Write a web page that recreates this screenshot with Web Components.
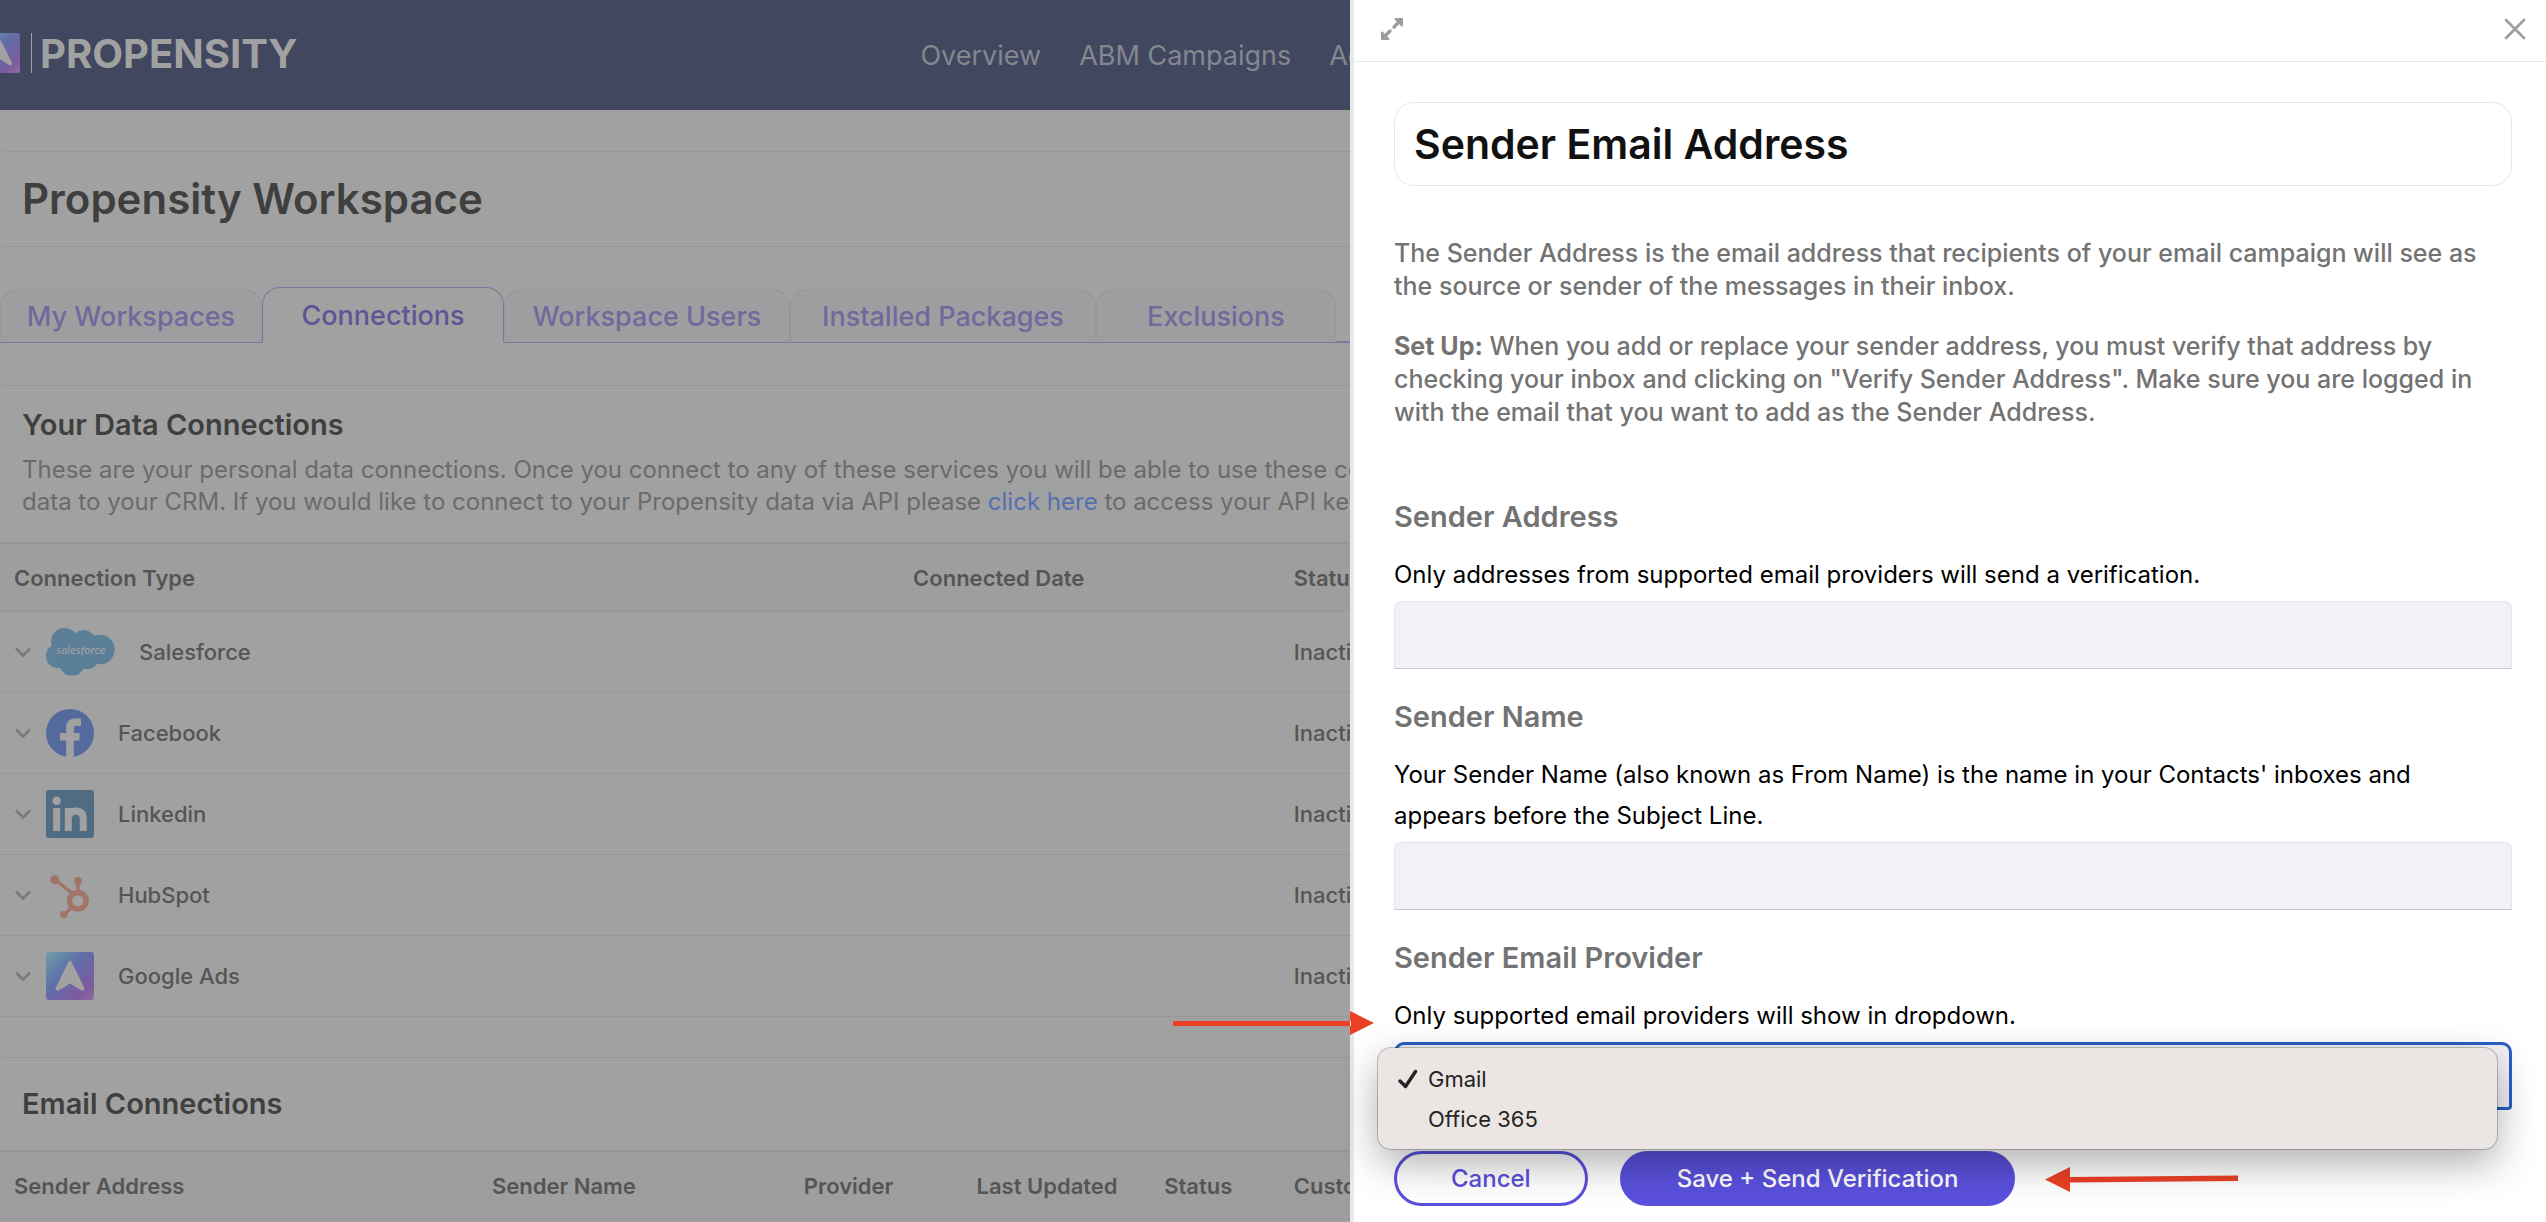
<!DOCTYPE html>
<html lang="en">
<head>
<meta charset="utf-8">
<title>Propensity Workspace</title>
<style>
    body {
        margin: 0;
        font-family: Inter, "Open Sans", sans-serif;
        background: #a1a1a1;
        --line: #969696;
        --purple: #5a50dc;
        --arrow: #eb4025;
    }
</style>
</head>
<body>
<app-shell>
    <workspace-header></workspace-header>
    <page-title>Propensity Workspace</page-title>
    <workspace-tabs></workspace-tabs>
    <data-card>
        <span slot="title">Your Data Connections</span>
        <card-text slot="text">These are your personal data connections. Once you connect to any of these services you will be able to use these connections<br>data to your CRM. If you would like to connect to your Propensity data via API please <a href="#">click here</a> to access your API key.</card-text>
        <connections-table></connections-table>
    </data-card>
    <data-card compact>
        <span slot="title">Email Connections</span>
        <email-table></email-table>
    </data-card>

    <side-drawer slot="drawer">
        <span slot="title">Sender Email Address</span>
        <sender-intro></sender-intro>
        <form-field heading="Sender Address" hint="Only addresses from supported email providers will send a verification."></form-field>
        <form-field heading="Sender Name" hint="Your Sender Name (also known as From Name) is the name in your Contacts' inboxes and|appears before the Subject Line."></form-field>
        <form-field heading="Sender Email Provider" hint="Only supported email providers will show in dropdown." options="Gmail,Office 365"></form-field>
        <drawer-actions></drawer-actions>
    </side-drawer>
</app-shell>

<script>
    // Brand mark, used in the header and in the Google Ads row
    const brandMark = id => `
        <svg width="100%" height="100%" viewBox="0 0 48 48" aria-hidden="true">
            <defs>
                <linearGradient id="${id}" x1="0" y1="0" x2="1" y2="1">
                    <stop offset="0" stop-color="#6f9fa8"/>
                    <stop offset=".42" stop-color="#5f6ea8"/>
                    <stop offset=".8" stop-color="#7c5aa0"/>
                    <stop offset="1" stop-color="#8e6c9e"/>
                </linearGradient>
            </defs>
            <rect width="48" height="48" rx="3" fill="url(#${id})"/>
            <path d="M22.2 10.2Q24 7 25.8 10.2L38.4 36Q38.8 39.4 35.4 38.6L24 31.5L12.6 38.6Q9.2 39.4 9.6 36Z" fill="#a1a1a1"/>
        </svg>`;

    class AppShell extends HTMLElement {
        connectedCallback() {
            this.attachShadow({ mode: 'open' });
            this.shadowRoot.innerHTML = `
                <style>
                    :host { display: flex; min-height: 100vh; overflow: hidden; }
                    main { flex: 675 1 0; min-width: 0; overflow: hidden; }
                    aside { flex: 598 1 0; min-width: 0; display: flex; position: relative; }
                </style>
                <main><slot></slot></main>
                <aside><slot name="drawer"></slot></aside>
            `;
        }
    }
    customElements.define('app-shell', AppShell);

    class WorkspaceHeader extends HTMLElement {
        connectedCallback() {
            this.attachShadow({ mode: 'open' });
            this.shadowRoot.innerHTML = `
                <style>
                    :host { display: block; background: #40475f; }
                    header {
                        display: grid;
                        grid-template-columns: minmax(0, 15fr) minmax(0, 7fr);
                        height: 110px;
                    }
                    .brand { display: flex; align-items: center; height: 106px; color: #a1a1a1; text-decoration: none; }
                    .mark { width: 40px; height: 40px; margin-left: -20px; }
                    .mark svg { display: block; }
                    .rule { width: 1px; height: 40px; margin: 0 8px 0 11px; background: #a1a1a1; }
                    .name { font-size: 40px; font-weight: 700; }
                    nav { display: flex; align-items: center; gap: 38px; }
                    nav a { color: #85878f; font-size: 27px; text-decoration: none; white-space: nowrap; }
                </style>
                <header>
                    <a class="brand" href="#">
                        <span class="mark">${brandMark('mark')}</span>
                        <span class="rule"></span>
                        <span class="name">PROPENSITY</span>
                    </a>
                    <nav>
                        <a href="#">Overview</a>
                        <a href="#">ABM Campaigns</a>
                        <a href="#">Ads</a>
                    </nav>
                </header>
            `;
        }
    }
    customElements.define('workspace-header', WorkspaceHeader);

    class PageTitle extends HTMLElement {
        connectedCallback() {
            this.attachShadow({ mode: 'open' });
            this.shadowRoot.innerHTML = `
                <style>
                    :host {
                        display: block;
                        margin-top: 41px;
                        border: solid var(--line);
                        border-width: 1px 0;
                        border-radius: 6px 0 0 6px;
                    }
                    h1 { margin: 0; padding: 22px; font-size: 42px; line-height: 50px; font-weight: 600; color: #3f3f3f; white-space: nowrap; }
                </style>
                <h1><slot></slot></h1>
            `;
        }
    }
    customElements.define('page-title', PageTitle);

    class WorkspaceTabs extends HTMLElement {
        connectedCallback() {
            this.attachShadow({ mode: 'open' });
            this.shadowRoot.innerHTML = `
                <style>
                    :host { display: block; margin-top: 40px; }
                    nav {
                        display: grid;
                        grid-template-columns: 262fr 242fr 286fr 306fr 240fr 14fr;
                        align-items: end;
                    }
                    button {
                        height: 54px;
                        padding: 0;
                        border: 1px solid var(--line);
                        border-bottom-color: #7d769f;
                        border-radius: 18px 18px 0 0;
                        background: #9e9ea0;
                        color: #6e6a9c;
                        font: 500 27px Inter, sans-serif;
                        white-space: nowrap;
                    }
                    button.active {
                        height: 56px;
                        border-color: #7d769f;
                        border-bottom-color: transparent;
                        background: none;
                        color: #5c5695;
                    }
                    .rest { height: 2px; background: #7d769f; }
                </style>
                <nav>
                    <button type="button">My Workspaces</button>
                    <button type="button" class="active">Connections</button>
                    <button type="button">Workspace Users</button>
                    <button type="button">Installed Packages</button>
                    <button type="button">Exclusions</button>
                    <span class="rest"></span>
                </nav>
            `;
        }
    }
    customElements.define('workspace-tabs', WorkspaceTabs);

    class DataCard extends HTMLElement {
        connectedCallback() {
            this.attachShadow({ mode: 'open' });
            this.shadowRoot.innerHTML = `
                <style>
                    :host {
                        display: block;
                        margin-top: 42px;
                        border-top: 1px solid var(--line);
                        border-radius: 6px 0 0 0;
                    }
                    :host([compact]) { margin-top: 40px; }
                    .head { padding: 22px 0 24px 22px; border-bottom: 2px solid var(--line); }
                    :host([compact]) .head { padding: 29px 0 29px 22px; }
                    h2 { margin: 0; font-size: 29px; line-height: 34px; font-weight: 600; color: #3f3f3f; white-space: nowrap; }
                </style>
                <div class="head">
                    <h2><slot name="title"></slot></h2>
                    <slot name="text"></slot>
                </div>
                <slot></slot>
            `;
        }
    }
    customElements.define('data-card', DataCard);

    class CardText extends HTMLElement {
        connectedCallback() {
            this.attachShadow({ mode: 'open' });
            this.shadowRoot.innerHTML = `
                <style>
                    :host { display: block; margin-top: 12px; font-size: 24px; line-height: 32px; color: #6b6b6b; white-space: nowrap; }
                    ::slotted(a) { color: #5470b0; text-decoration: none; }
                </style>
                <slot></slot>
            `;
        }
    }
    customElements.define('card-text', CardText);

    const tableStyles = `
        :host { display: block; }
        table { width: 100%; table-layout: fixed; border-collapse: collapse; font-size: 22px; color: #555; }
        th, td { padding: 0 0 0 14px; border-bottom: 1px solid var(--line); text-align: left; white-space: nowrap; }
        th { height: 67px; background: #9e9e9e; font-weight: 600; }
        td { height: 80px; font-weight: 500; }
    `;

    const logos = {
        Salesforce: `
            <svg width="69" height="48" viewBox="0 0 69 48" aria-hidden="true">
                <g fill="#5b7f99">
                    <circle cx="18.5" cy="13.5" r="13.5"/><circle cx="37.5" cy="14" r="12"/>
                    <circle cx="54" cy="21.5" r="14.7"/><circle cx="12" cy="28" r="12"/>
                    <circle cx="26" cy="35" r="12.8"/><circle cx="41" cy="29.5" r="11.8"/>
                    <rect x="14" y="12" width="40" height="23"/>
                </g>
                <text x="35" y="26" text-anchor="middle" font-family="Lato, 'Liberation Sans', sans-serif" font-style="italic" font-size="12" fill="#a1a1a1">salesforce</text>
            </svg>`,
        Facebook: `
            <svg width="48" height="48" viewBox="0 0 48 48" aria-hidden="true">
                <circle cx="24" cy="24" r="24" fill="#546a9c"/>
                <path d="M24 48V18.5Q24 13.2 29.5 13.2H35M14 27.7H33.5" fill="none" stroke="#a1a1a1" stroke-width="7.6"/>
            </svg>`,
        Linkedin: `
            <svg width="48" height="48" viewBox="0 0 48 48" aria-hidden="true">
                <rect width="48" height="48" rx="3" fill="#506c83"/>
                <circle cx="10.7" cy="10.8" r="4.2" fill="#a1a1a1"/>
                <path d="M10.7 18V41M22.3 18V41M22.3 29Q22.3 21 29.5 21Q37.3 21 37.3 29V41" fill="none" stroke="#a1a1a1" stroke-width="7"/>
            </svg>`,
        HubSpot: `
            <svg width="48" height="48" viewBox="0 0 48 48" aria-hidden="true">
                <g fill="none" stroke="#a07568">
                    <circle cx="31.8" cy="29.8" r="8.3" stroke-width="5.4"/>
                    <path d="M8.5 8.5L25.5 21.5M32 10V20M18 44L25.5 36.5" stroke-width="3.4"/>
                </g>
                <g fill="#a07568"><circle cx="8.7" cy="8.7" r="4.6"/><circle cx="32" cy="10" r="4"/><circle cx="17.8" cy="43.7" r="3.6"/></g>
            </svg>`,
        'Google Ads': brandMark('ads')
    };

    class ConnectionsTable extends HTMLElement {
        connectedCallback() {
            this.attachShadow({ mode: 'open' });
            const rows = Object.keys(logos).map(name => `
                <tr>
                    <td>
                        <div class="service">
                            <button type="button" aria-label="Expand ${name}">
                                <svg width="18" height="12" viewBox="0 0 18 12"><path d="M2 2.5L9 9.5L16 2.5" fill="none" stroke="#7b7b7b" stroke-width="2.8"/></svg>
                            </button>
                            <span class="logo">${logos[name]}</span>
                            ${name}
                        </div>
                    </td>
                    <td></td>
                    <td>Inactive</td>
                </tr>`).join('');
            this.shadowRoot.innerHTML = `
                <style>
                    ${tableStyles}
                    .service { display: flex; align-items: center; }
                    .logo { min-width: 48px; height: 48px; margin: 0 24px 0 14px; }
                    .logo svg { display: block; }
                    button { display: flex; padding: 0; border: 0; background: none; }
                </style>
                <table>
                    <colgroup>
                        <col style="width: 66.6%"><col style="width: 28.2%"><col>
                    </colgroup>
                    <thead>
                        <tr><th>Connection Type</th><th>Connected Date</th><th>Status</th></tr>
                    </thead>
                    <tbody>${rows}</tbody>
                </table>
            `;
        }
    }
    customElements.define('connections-table', ConnectionsTable);

    class EmailTable extends HTMLElement {
        connectedCallback() {
            this.attachShadow({ mode: 'open' });
            this.shadowRoot.innerHTML = `
                <style>
                    ${tableStyles}
                </style>
                <table>
                    <colgroup>
                        <col style="width: 35.4%"><col style="width: 23.1%"><col style="width: 12.8%">
                        <col style="width: 13.9%"><col style="width: 9.6%"><col>
                    </colgroup>
                    <thead>
                        <tr>
                            <th>Sender Address</th>
                            <th>Sender Name</th>
                            <th>Provider</th>
                            <th>Last Updated</th>
                            <th>Status</th>
                            <th>Custom</th>
                        </tr>
                    </thead>
                </table>
            `;
        }
    }
    customElements.define('email-table', EmailTable);

    class SideDrawer extends HTMLElement {
        connectedCallback() {
            this.attachShadow({ mode: 'open' });
            this.shadowRoot.innerHTML = `
                <style>
                    :host { display: block; flex: 1; min-width: 0; background: #fff; border-left: 4px solid #e8e8e8; }
                    .bar {
                        display: flex;
                        justify-content: space-between;
                        align-items: center;
                        height: 57px;
                        padding: 0 20px 4px 26px;
                        border-bottom: 1px solid #e6e6e6;
                    }
                    .bar button { display: flex; padding: 0; border: 0; background: none; }
                    .body { padding: 40px 34px 16px 40px; }
                    h1 {
                        margin: 0 0 51px;
                        padding: 16px 19px;
                        border: 1px solid #e6e6e6;
                        border-radius: 20px;
                        font-size: 41px;
                        line-height: 50px;
                        font-weight: 600;
                        color: #111;
                    }
                </style>
                <div class="bar">
                    <button type="button" aria-label="Expand">
                        <svg width="24" height="24" viewBox="0 0 24 24" fill="#9c9c9c" stroke="#9c9c9c" stroke-linejoin="round" stroke-linecap="round">
                            <path d="M15.5 2H22V8.5ZM2 15.5V22H8.5Z" stroke-width="2"/>
                            <path d="M19 5L14 10M5 19L10 14" stroke-width="3.4"/>
                        </svg>
                    </button>
                    <button type="button" aria-label="Close">
                        <svg width="22" height="22" viewBox="0 0 22 22"><path d="M2 2L20 20M20 2L2 20" stroke="#9c9c9c" stroke-width="2.6" stroke-linecap="round"/></svg>
                    </button>
                </div>
                <div class="body">
                    <h1><slot name="title"></slot></h1>
                    <slot></slot>
                </div>
            `;
        }
    }
    customElements.define('side-drawer', SideDrawer);

    class SenderIntro extends HTMLElement {
        connectedCallback() {
            this.attachShadow({ mode: 'open' });
            this.shadowRoot.innerHTML = `
                <style>
                    :host { display: block; margin-bottom: 71px; font-size: 25px; line-height: 33px; font-weight: 500; color: #737373; }
                    p { margin: 0; }
                    p + p { margin-top: 27px; }
                    b { font-weight: 700; }
                </style>
                <p>The Sender Address is the email address that recipients of your email campaign will see as<br>the source or sender of the messages in their inbox.</p>
                <p><b>Set Up:</b> When you add or replace your sender address, you must verify that address by<br>checking your inbox and clicking on "Verify Sender Address". Make sure you are logged in<br>with the email that you want to add as the Sender Address.</p>
            `;
        }
    }
    customElements.define('sender-intro', SenderIntro);

    class FormField extends HTMLElement {
        connectedCallback() {
            const options = this.getAttribute('options');
            const hint = this.getAttribute('hint').replace('|', '<br>');
            this.attachShadow({ mode: 'open' });
            this.shadowRoot.innerHTML = `
                <style>
                    :host { display: block; margin-bottom: 31px; }
                    label { display: block; margin-bottom: 20px; font-size: 29px; line-height: 34px; font-weight: 600; color: #737373; }
                    .hint { position: relative; margin: 0 0 6px; font-size: 24px; line-height: 41px; color: #000; }
                    .control { position: relative; }
                    input, select {
                        display: block;
                        box-sizing: border-box;
                        width: 100%;
                        height: 68px;
                        padding: 0 16px;
                        border: 1px solid #e3e3e8;
                        border-bottom-color: #c8c8cf;
                        border-radius: 8px 8px 0 0;
                        background: #f2f1f7;
                        font: 24px Inter, sans-serif;
                        outline: none;
                    }
                    select { appearance: none; border: 3px solid #2a5fc4; border-radius: 10px 10px 4px 4px; }
                    /* Open list covers the select */
                    option-menu { position: absolute; top: 6px; left: -16px; right: 15px; }
                    pointer-arrow { position: absolute; top: 15px; right: 100%; margin-right: 20px; }
                </style>
                <label for="field">${this.getAttribute('heading')}</label>
                <p class="hint" id="hint">${hint}${options ? '<pointer-arrow></pointer-arrow>' : ''}</p>
                <div class="control">
                    ${options
                        ? `<select id="field" aria-describedby="hint">${options.split(',').map(o => `<option>${o}</option>`).join('')}</select>
                           <option-menu options="${options}"></option-menu>`
                        : '<input id="field" type="text" aria-describedby="hint">'}
                </div>
            `;
        }
    }

    class OptionMenu extends HTMLElement {
        connectedCallback() {
            const items = this.getAttribute('options').split(',');
            this.attachShadow({ mode: 'open' });
            this.shadowRoot.innerHTML = `
                <style>
                    :host {
                        display: block;
                        z-index: 2;
                        padding: 11px 20px 10px;
                        border-radius: 13px;
                        background: #ebe6e3;
                        box-shadow: 0 0 0 1px rgba(0, 0, 0, .22), 0 14px 40px rgba(0, 0, 0, .32);
                    }
                    ul { margin: 0; padding: 0; list-style: none; }
                    li { display: grid; grid-template-columns: 30px 1fr; align-items: center; height: 40px; font-size: 22px; color: #242424; }
                    svg { display: block; }
                </style>
                <ul role="listbox">
                    ${items.map((item, i) => `
                        <li role="option" aria-selected="${i === 0}">
                            <span>${i === 0 ? '<svg width="20" height="20" viewBox="0 0 20 20"><path d="M2 12L7.5 17.5L17.5 2.5" fill="none" stroke="#242424" stroke-width="3.4" stroke-linecap="round" stroke-linejoin="round"/></svg>' : ''}</span>
                            ${item}
                        </li>`).join('')}
                </ul>
            `;
        }
    }

    class PointerArrow extends HTMLElement {
        connectedCallback() {
            this.attachShadow({ mode: 'open' });
            const left = this.hasAttribute('left');
            this.shadowRoot.innerHTML = `
                <style>
                    :host { display: block; }
                    svg { display: block; fill: var(--arrow); }
                </style>
                ${left
                    ? '<svg width="193" height="26" viewBox="0 0 193 26"><path d="M0 13.5L25 1V26ZM24 11L193 9.5V15L24 16.5Z"/></svg>'
                    : '<svg width="201" height="26" viewBox="0 0 201 26"><path d="M201 13L177 1V25ZM0 11H178V16H0Z"/></svg>'}
            `;
        }
    }
    customElements.define('pointer-arrow', PointerArrow);
    customElements.define('option-menu', OptionMenu);
    customElements.define('form-field', FormField);

    class DrawerActions extends HTMLElement {
        connectedCallback() {
            this.attachShadow({ mode: 'open' });
            this.shadowRoot.innerHTML = `
                <style>
                    :host { display: flex; align-items: center; padding-top: 10px; }
                    button {
                        box-sizing: border-box;
                        height: 55px;
                        padding: 0 54px;
                        border: 3px solid var(--purple);
                        border-radius: 28px;
                        background: var(--purple);
                        color: #fff;
                        font: 500 24px Inter, sans-serif;
                        white-space: nowrap;
                    }
                    .cancel { margin-right: 32px; background: #fff; color: var(--purple); }
                    pointer-arrow { margin-left: 30px; }
                </style>
                <button type="button" class="cancel">Cancel</button>
                <button type="submit">Save + Send Verification</button>
                <pointer-arrow left></pointer-arrow>
            `;
        }
    }
    customElements.define('drawer-actions', DrawerActions);
</script>
</body>
</html>
